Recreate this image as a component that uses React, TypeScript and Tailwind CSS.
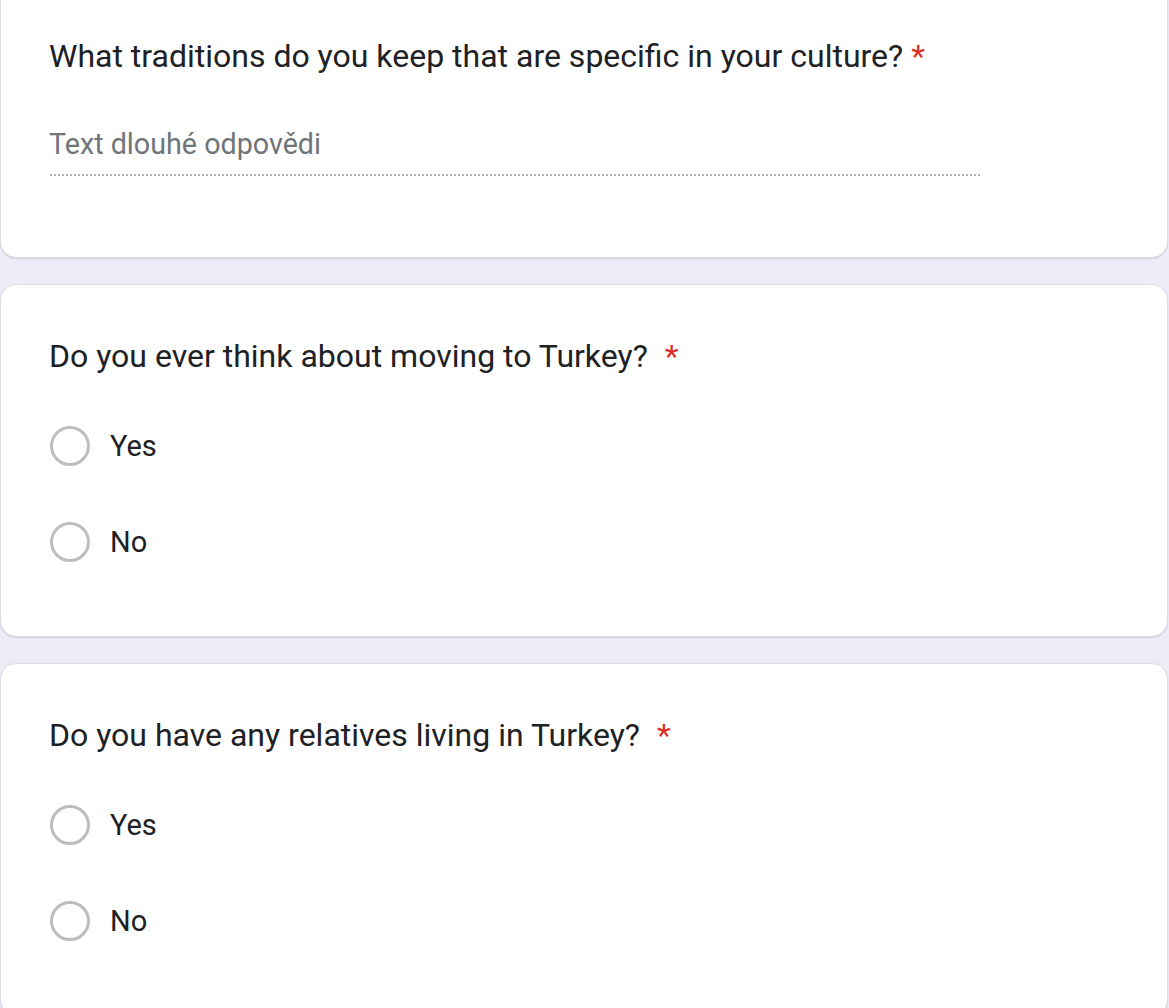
import React from "react";

const font = { fontFamily: "Roboto, 'Noto Sans', Arial, sans-serif" };

function Radio({ label }: { label: string }) {
  return (
    <div className="flex h-[96px] items-center">
      <span className="box-border h-[40px] w-[40px] rounded-full border-[3.5px] border-[#bdbdbd]" />
      <span className="ml-[20px] text-[29px] leading-[40px] text-[#202124]">{label}</span>
    </div>
  );
}

function Question({ text, gap }: { text: string; gap: string }) {
  return (
    <div className="-ml-[1px] flex h-[40px] items-center text-[32px] leading-[40px] text-[#202124]">
      <span>{text}</span>
      <span className={`${gap} text-[#d93025]`}>*</span>
    </div>
  );
}

function ChoiceCard({ text, gap }: { text: string; gap: string }) {
  return (
    <section className="rounded-[16px] border border-[#dadce0] bg-white pb-[46px] pl-[49px] pt-[51px] shadow-[0_1px_1px_rgba(0,0,0,0.12)]">
      <Question text={text} gap={gap} />
      <div className="mt-[22px]">
        <Radio label="Yes" />
        <Radio label="No" />
      </div>
    </section>
  );
}

export default function App() {
  return (
    <main className="min-h-screen overflow-hidden bg-[#eeebf6] pr-[1px]" style={font}>
      <div className="flex flex-col gap-[26px]">
        <section className="-mt-[16px] rounded-[16px] border border-[#dadce0] bg-white pb-[81px] pl-[49px] pt-[51px] shadow-[0_1px_1px_rgba(0,0,0,0.12)]">
          <Question text="What traditions do you keep that are specific in your culture?" gap="ml-[8px]" />
          <div className="-ml-[1px] mt-[50px] text-[28.7px] leading-[36px] text-[#70757a]">Text dlouhé odpovědi</div>
          <div className="mt-[12px] h-[2px] w-[930px] bg-[linear-gradient(to_right,#b4b4b4_50%,transparent_50%)] bg-[length:4px_2px]" />
        </section>
        <ChoiceCard text="Do you ever think about moving to Turkey?" gap="ml-[17px]" />
        <ChoiceCard text="Do you have any relatives living in Turkey?" gap="ml-[17px]" />
      </div>
    </main>
  );
}
